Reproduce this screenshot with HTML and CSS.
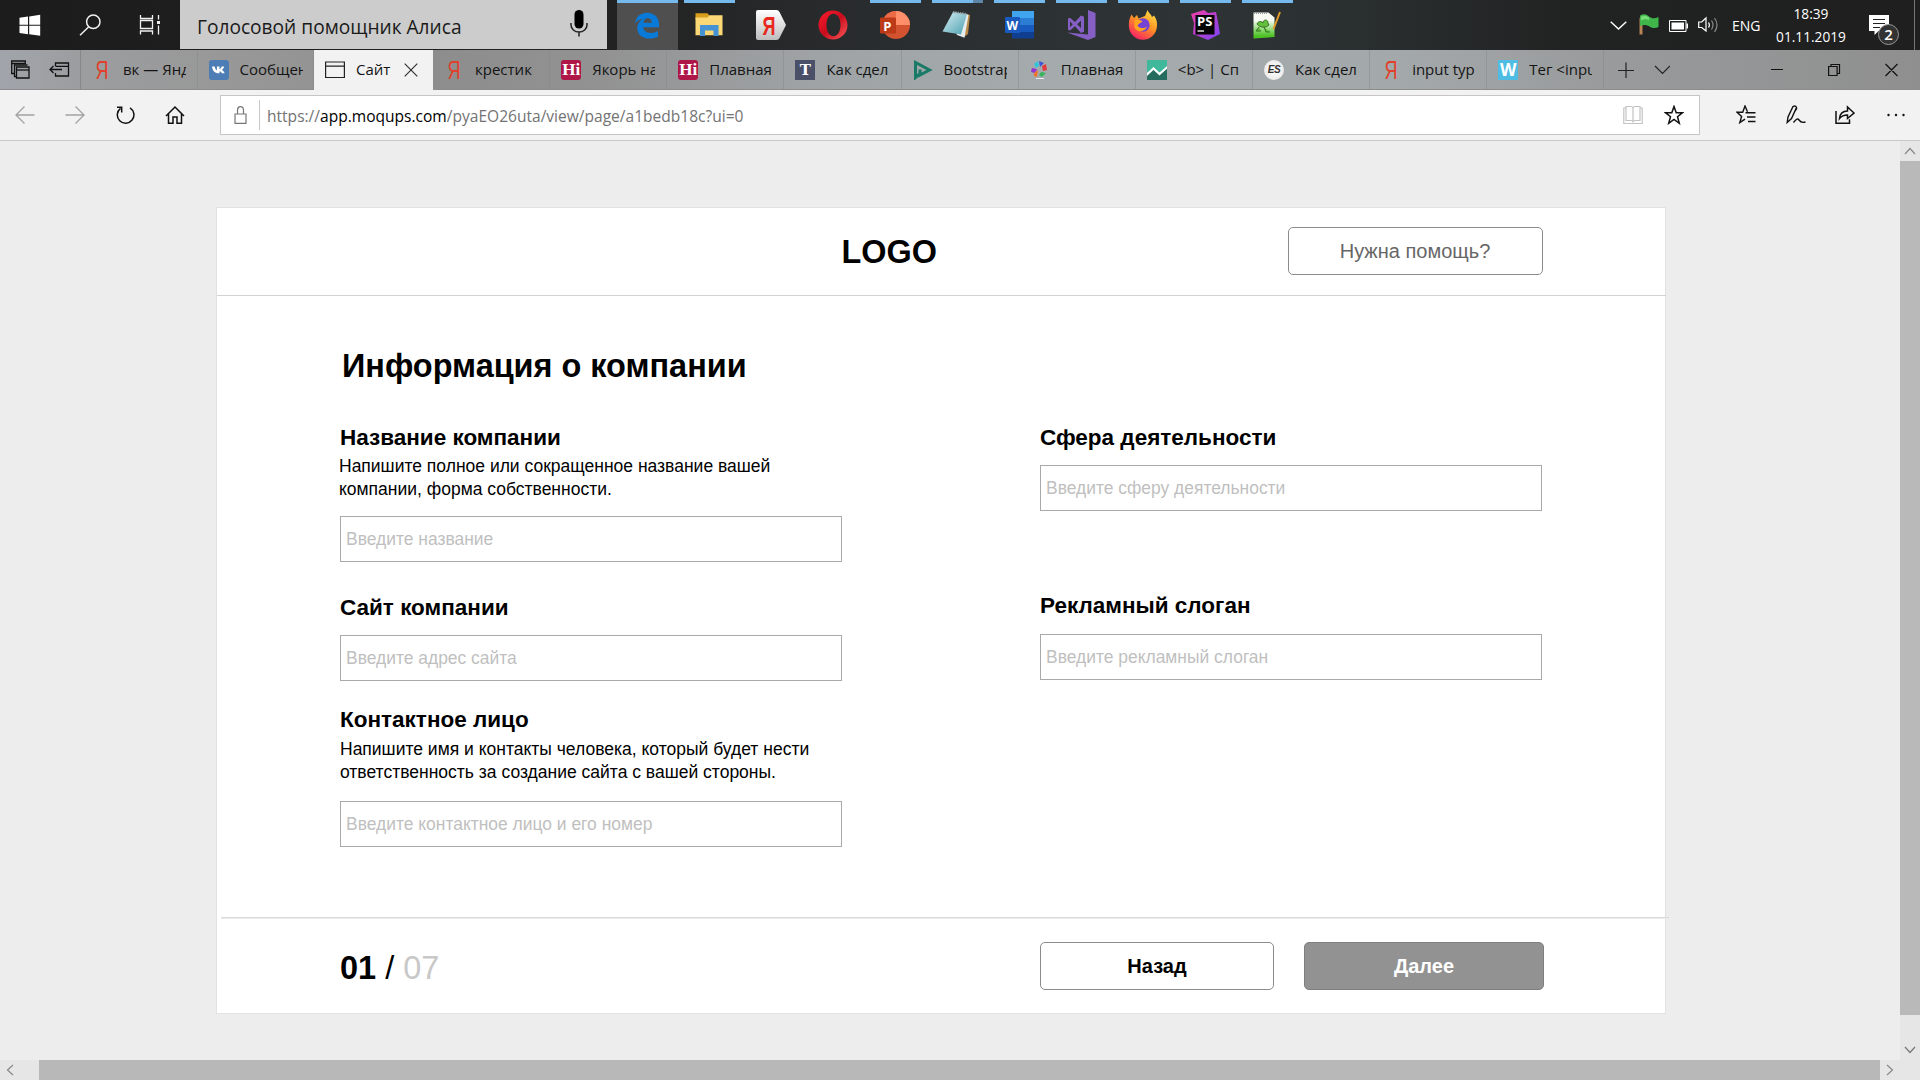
FILE: index.html
```html
<!DOCTYPE html>
<html lang="ru">
<head>
<meta charset="utf-8">
<title>Сайт</title>
<link rel="stylesheet" href="styles.css">
</head>
<body>
<div class="taskbar">
  <div class="sysbtns">
    <svg width="60" height="50" viewBox="0 0 60 50"><path fill="#fff" d="M19.5 17.8l8.500-1.200v8.200h-8.500zM29.200 16.400l11-1.600v10h-11zM19.500 25.800h8.500v8.400l-8.500-1.200zM29.200 25.800h11v10l-11-1.600z"/></svg>
    <svg width="60" height="50" viewBox="0 0 60 50" fill="none" stroke="#f0f0f0" stroke-width="1.500"><circle cx="33.300" cy="21.800" r="6.700"/><path d="M28.800 26.800L20 35.200"/></svg>
    <svg width="60" height="50" viewBox="0 0 60 50" fill="none" stroke="#f0f0f0" stroke-width="1.300"><path d="M20.500 15v3.500h12V15M20.500 34.500V31h12v3.500M20.500 20.500h12v8h-12zM38.500 15v4.500M38.500 25.500v9"/><path d="M37 21h3v3h-3z" fill="#f0f0f0" stroke="none"/></svg>
  </div>
  <div class="search"><span>Голосовой помощник Алиса</span>
    <svg width="18" height="28" viewBox="0 0 18 28"><rect x="4.500" y="0" width="9" height="18.500" rx="4.500"/><path d="M1 13v2a8 7 0 0 0 16 0v-2M9 22v4.500" fill="none" stroke="#222" stroke-width="1.500"/></svg>
  </div>
  <div class="apps">
    <div class="app on active"><svg width="30" height="30" viewBox="0 0 30 30"><path fill="#0a7ad8" d="M3 13.500C4 6 9.200 2.700 15 2.700c7.500 0 12 5 12 11.600v3H11.200c.3 4 3.800 5.700 7.800 5.700 2.700 0 5-.7 7-1.900v5.700c-2.400 1.200-5.200 1.800-8.400 1.800C10.200 28.600 5.300 24.400 5.300 18c0-4 2-7.100 5.200-9.100C7 9.500 4.800 11 3 13.500zM11.300 12.800h8.600c0-2.700-1.500-4.500-4.100-4.500-2.400 0-4.100 1.800-4.500 4.500z"/></svg></div>
    <div class="app on"><svg width="30" height="30" viewBox="0 0 30 30"><path fill="#d89d1c" d="M1.500 3.200h12l2.500 3H27v3H1.500z"/><path fill="#fbd775" d="M1.500 7.500h12l2-2.300h13v20h-27z"/><path fill="#4593d4" d="M6 26V15h18.500v11h-5v-5.500h-8.500V26z"/></svg></div>
    <div class="app"><svg width="32" height="32" viewBox="0 0 32 32"><defs><linearGradient id="ya" x1="0" y1="0" x2="0" y2="1"><stop offset="0" stop-color="#fff"/><stop offset="1" stop-color="#bdbdbd"/></linearGradient></defs><path fill="url(#ya)" d="M3 1h18.500q2 0 3 2L31 16l-6.500 13q-1 2-3 2H3q-2 0-2-2V3q0-2 2-2z"/><text x="7.500" y="25.500" class="ya-big" textLength="13" lengthAdjust="spacingAndGlyphs">Я</text></svg></div>
    <div class="app"><svg width="30" height="30" viewBox="0 0 30 30"><defs><linearGradient id="op" x1="0" y1="0" x2="1" y2="1"><stop offset="0" stop-color="#ff1b2d"/><stop offset=".5" stop-color="#c80d1d"/><stop offset="1" stop-color="#ff5a5a"/></linearGradient></defs><path fill="url(#op)" fill-rule="evenodd" d="M15 .5a14.500 14.500 0 1 0 0 29 14.500 14.500 0 0 0 0-29zM15.500 3.800c4.300 0 7 5 7 11.200s-2.700 11.200-7 11.200-7-5-7-11.200 2.700-11.200 7-11.200z"/></svg></div>
    <div class="app on"><svg width="30" height="30" viewBox="0 0 30 30"><circle cx="16" cy="15" r="14" fill="#d35230"/><path fill="#ed6c47" d="M16 15V1A14 14 0 0 0 2 15z"/><path fill="#ff8f6b" d="M16 15V1a14 14 0 0 1 14 14z"/><rect x="0" y="7.500" width="16" height="16" rx="1" fill="#bd3a18"/><text x="3.300" y="20.500" class="office">P</text></svg></div>
    <div class="app on multi"><svg width="30" height="30" viewBox="0 0 30 30"><defs><linearGradient id="np" x1="0" y1="0" x2="1" y2="1"><stop offset="0" stop-color="#d7eff4"/><stop offset="1" stop-color="#4b9fb0"/></linearGradient></defs><path d="M25 4l3 1-2 19-4 3z" fill="#b98a45"/><path d="M24.500 4l2 1.200-4 22.500-8-3z" fill="#e6edf0"/><path fill="url(#np)" d="M11 2l14 2-6 20.500L.500 21.500z"/><path d="M11 2l14 2" stroke="#9aa6aa" stroke-width="2" stroke-dasharray="1.300 1"/></svg></div>
    <div class="app on"><svg width="30" height="30" viewBox="0 0 30 30"><path fill="#41a5ee" d="M8 1h22v7H8z"/><path fill="#2b7cd3" d="M8 8h22v7H8z"/><path fill="#185abd" d="M8 15h22v7H8z"/><path fill="#103f91" d="M8 22h22v6.500H8z"/><rect x="1" y="7" width="15" height="16" rx="1" fill="#185abd"/><text x="2.500" y="19.500" class="office office-w">W</text></svg></div>
    <div class="app on"><svg width="30" height="30" viewBox="0 0 30 30" fill="#865fc5"><path d="M22 0l7.500 3v24L22 30 1 22.500l21 2z"/><path fill-rule="evenodd" d="M2 8.500l2-.8L9 12l6-6.500 3 1.200v15L15 23l-6-6.700-5 4.200-2-.8zM4 11.500v5.800l2.800-3zM15 10.800l-4 3.500 4 3.700z"/></svg></div>
    <div class="app on"><svg width="30" height="30" viewBox="0 0 30 30"><defs><linearGradient id="ff" x1=".8" y1="0" x2=".2" y2="1"><stop offset="0" stop-color="#ffe04a"/><stop offset=".45" stop-color="#ff9322"/><stop offset="1" stop-color="#f5156c"/></linearGradient></defs><path fill="url(#ff)" d="M3.500 4.500L6 8l3-3 1.500 3.500L14.500 7 17 6l2.500-6c1 3 3.500 4 4.500 7l2-1.500c3 4 3.500 8 2.800 12A14 14 0 0 1 1 17.500C.500 13 1 9 3.500 4.500z"/><circle cx="15" cy="15" r="6.700" fill="#7542d4"/><path fill="#ffa41c" d="M6.500 10.500c4-2 6 0 8 .5-1 2-3.500 2-5 4.500 2 3.500 7 3 9.500 1-2 6-10 6-12.500 1z"/></svg></div>
    <div class="app on"><svg width="32" height="32" viewBox="0 0 32 32"><defs><linearGradient id="ps" x1="0" y1="0" x2="1" y2="1"><stop offset="0" stop-color="#f13ea8"/><stop offset="1" stop-color="#7a44f5"/></linearGradient></defs><path fill="url(#ps)" d="M2 5L15 1l4 3 8-1 2 10 2 12-12 6-10-4-5-2 1-11z"/><rect x="6.500" y="6" width="19" height="19.500" fill="#050505"/><text x="8" y="17" class="pstorm">PS</text><path d="M8.500 22h6.500" stroke="#fff" stroke-width="1.300"/></svg></div>
    <div class="app on"><svg width="30" height="30" viewBox="0 0 30 30"><defs><linearGradient id="npp" x1="0" y1="0" x2="0" y2="1"><stop offset=".3" stop-color="#f7fbf3"/><stop offset=".9" stop-color="#4cc224"/></linearGradient></defs><path fill="url(#npp)" d="M1.500 2.500h15l6 5V27l-21 1.500z"/><path d="M2 3h14" stroke="#999" stroke-width="2" stroke-dasharray="1 1"/><path fill="#62c03c" stroke="#275c16" stroke-width=".8" d="M5 14c1-3 5-3 6-1 0-4 5-4 5 0l1 2c-3 3-9 3-12-1zM7 17l-3 4h5M12 17l2 5h4"/><path d="M28 2l-6.500 17" stroke="#e19a25" stroke-width="2"/></svg></div>
  </div>
  <div class="tray">
    <svg class="t-chev" width="17" height="9" viewBox="0 0 17 9" fill="none" stroke="#fff" stroke-width="1.400"><path d="M.7.7l7.800 7.300L16.300.7"/></svg>
    <svg class="t-flag" width="20" height="21" viewBox="0 0 20 21"><path d="M.5 4h3v16.500h-3z" fill="#b98354"/><path fill="#3fb54a" d="M1 1.500c4-2 6-1.500 9 1s6 2 9.500.5v10c-3 1.500-6 1.500-9-.5s-6-2-9.500-.5z"/><path fill="#76dd77" d="M2 2.500c4-1.500 5-1 8 1v3c-3-2-5-1-8 0z"/></svg>
    <svg class="t-bat" width="19" height="12" viewBox="0 0 19 12"><path fill="none" stroke="#fff" d="M.5.5h16.500v11H.5z"/><path fill="#fff" d="M2.500 2.500h12.500v7H2.500zM17.500 3.500H19v5h-1.500z"/></svg>
    <svg class="t-vol" width="21" height="18" viewBox="0 0 21 18" fill="none" stroke="#fff" stroke-width="1.200"><path d="M.7 6h3L8 2v13L3.700 11.500h-3z"/><path d="M10.500 6.500q1.800 2.500 0 5"/><path stroke="#8a8a8a" d="M13.500 4.500q3 4.300 0 9M16.500 2q5 6.800 0 14"/></svg>
    <span class="lang">ENG</span>
    <div class="clock"><span>18:39</span><span>01.11.2019</span></div>
    <div class="notif"><svg width="21" height="21" viewBox="0 0 21 21"><path fill="#fff" d="M0 0h20v16H9.500L5.500 20v-4H0z"/><path stroke="#222" stroke-width="1.200" d="M4 4.500h12M4 8.500h12M4 12.500h7"/></svg><span class="badge">2</span></div>
  </div>
</div>

<div class="tabbar">
  <div class="aside">
    <svg width="22" height="22" viewBox="0 0 22 22" fill="none" stroke="#111" stroke-width="1.300"><path d="M4 14.500H.7V2h13.600v3M.7 4.500h13.600"/><path d="M5 17.500H3.500V6h13"/><path fill="#9da1a6" d="M5.500 8h12.500v11h-12.500z"/><path d="M5.500 11h12.500"/></svg>
    <svg width="22" height="22" viewBox="0 0 22 22" fill="none" stroke="#111" stroke-width="1.300"><path d="M6.500 7V4h13v13h-13v-3M6.500 7.300h13M13 10.500H1M4.500 7L1 10.500 4.500 14"/></svg>
  </div>
  <div class="tab"><span class="fav fav-ya">Я</span><span class="name">вк — Янд</span></div>
  <div class="tab"><svg class="fav" viewBox="0 0 20 20"><rect width="20" height="20" rx="3" fill="#4d7db5"/><path fill="#fff" d="M3 6.500h2.600c.6 2.300 1.400 3.500 2.300 3.800V6.500h2.600v2.800c1-.4 1.700-1.500 2.200-2.800h2.500c-.4 1.500-1.300 2.700-2.300 3.500 1.300.7 2.100 1.800 2.800 3.300h-2.800c-.5-1.100-1.300-1.900-2.400-2.100v2.100c-4.500.3-7-2.300-7.500-6.800z"/></svg><span class="name">Сообщен</span></div>
  <div class="tab current"><svg class="fav" viewBox="0 0 20 20" fill="none" stroke="#222" stroke-width="1.200"><path d="M.6 2h18.800v15.500H.6zM.6 6.200h18.800"/></svg><span class="name">Сайт</span><svg class="x" width="14" height="14" viewBox="0 0 14 14" stroke="#333" stroke-width="1.200"><path d="M.7.7l12.600 12.600M13.300.7L.7 13.300"/></svg></div>
  <div class="tab"><span class="fav fav-ya">Я</span><span class="name">крестик</span></div>
  <div class="tab"><span class="fav fav-hi">Hi</span><span class="name">Якорь на</span></div>
  <div class="tab"><span class="fav fav-hi">Hi</span><span class="name">Плавная</span></div>
  <div class="tab"><span class="fav fav-t">T</span><span class="name">Как сдел</span></div>
  <div class="tab"><svg class="fav" viewBox="0 0 20 20"><path fill="none" stroke="#187a67" stroke-width="3" d="M6 14.500L2.500 17.500V2.500l14 7.500-9.500 5V9.500"/></svg><span class="name">Bootstrap</span></div>
  <div class="tab"><svg class="fav" viewBox="0 0 20 20"><path fill="#2fc6dc" d="M4 4l4-3 1 5-3 2z"/><path fill="#3c52d8" d="M9 1l5 2-4 4z"/><path fill="#e23a3e" d="M12 6l4-2 1 6-4 1z"/><path fill="#8f34cf" d="M2 8l5 1-2 4-4-1z"/><path fill="#f0752c" d="M4 13l4-3-1 7-3-1z"/><path fill="#35b65c" d="M11 12l5 1-4 4-3-2z"/><path d="M6 18.500h8" stroke="#e9e9ef"/></svg><span class="name">Плавная</span></div>
  <div class="tab"><svg class="fav" viewBox="0 0 20 20"><path fill="#3fb89c" d="M0 0h20v20H0z"/><path fill="#256b5e" d="M0 15l7-6 6 5 7-7v13H0z"/><path fill="none" stroke="#fff" stroke-width="2.200" d="M-1 15.500l7.500-7 6 5.500L21 6.500"/></svg><span class="name">&lt;b&gt; | Сп</span></div>
  <div class="tab"><span class="fav fav-es">ES</span><span class="name">Как сдел</span></div>
  <div class="tab"><span class="fav fav-ya">Я</span><span class="name">input typ</span></div>
  <div class="tab last"><span class="fav fav-w">W</span><span class="name">Тег &lt;inpu</span></div>
  <svg class="newtab" width="52" height="16" viewBox="0 0 52 16" fill="none" stroke="#222" stroke-width="1.200"><path d="M0 8.500h16M8 .5v16M37 4l7.500 7.500L52 4"/></svg>
  <svg class="winctl" width="127" height="14" viewBox="0 0 127 14" fill="none" stroke="#111" stroke-width="1.200"><path d="M0 6.500h12M57.600 3.500h8.500v9h-8.500zM60 3.500V1.500h8.500v9H66M114.500 1l12 12M126.500 1l-12 12"/></svg>
</div>

<div class="toolbar">
  <div class="nav">
    <svg width="20" height="20" viewBox="0 0 20 20" fill="none" stroke="#a3a3a3" stroke-width="1.300"><path d="M19.500 10H1M9.500 1.500L1 10l8.500 8.500"/></svg>
    <svg width="20" height="20" viewBox="0 0 20 20" fill="none" stroke="#a3a3a3" stroke-width="1.300"><path d="M.5 10H19M10.500 1.500L19 10l-8.500 8.500"/></svg>
    <svg width="20" height="20" viewBox="0 0 20 20" fill="none" stroke="#111" stroke-width="1.500"><path d="M5.500 3.300a8.300 8.300 0 1 0 9.500-.5M2 2.300h4.700V7.500"/></svg>
    <svg width="20" height="20" viewBox="0 0 20 20" fill="none" stroke="#111" stroke-width="1.500"><path d="M1 11l9-9 9 9M3.500 9v9.300H8V12h4v6.300h4.500V9"/></svg>
  </div>
  <div class="url">
    <svg class="lock" width="14" height="18" viewBox="0 0 14 18" fill="none" stroke="#777" stroke-width="1.200"><path d="M1 8h11v9.300H1zM3.500 8V4.500a3 3.800 0 0 1 6 0V8"/></svg>
    <i class="sep"></i>
    <span class="addr">https://<b>app.moqups.com</b>/pyaEO26uta/view/page/a1bedb18c?ui=0</span>
    <svg width="20" height="20" viewBox="0 0 20 20" fill="none" stroke="#c4c4c4" stroke-width="1.200"><path d="M3 1.500h5q2 0 2 2 0-2 2-2h5v14h-5q-2 0-2 2 0-2-2-2H3zM10 3.500v14M3 3H.8v15.500h18.400V3H17"/></svg>
    <svg width="20" height="20" viewBox="0 0 20 20" fill="none" stroke="#111" stroke-width="1.500"><path d="M10 1.500l2.200 6.200h6.300l-5 4 1.800 6.600L10 14.400l-5.300 3.900 1.800-6.600-5-4h6.300z"/></svg>
  </div>
  <div class="acts">
    <svg width="20" height="20" viewBox="0 0 20 20" fill="none" stroke="#111" stroke-width="1.400"><path d="M11.500 6.800L9 1 6.700 7.200H1l4.600 4.200-1.800 6.200L9 14.200M9.500 7.700H19.500M11 12h8.500M12 16.500h7.500"/></svg>
    <svg width="20" height="20" viewBox="0 0 20 20" fill="none" stroke="#111" stroke-width="1.400"><path d="M1.200 17.500L2 12 7 1.500q2.500-1.300 3.500 1L5.500 13.500zM9 6L11 3M7.500 17.500c3-4 4.500-4 5.500-2.500s3 3 6.500 2"/></svg>
    <svg width="20" height="20" viewBox="0 0 20 20" fill="none" stroke="#111" stroke-width="1.500"><path d="M1 6v12.200h13.500v-4M4.500 13.500C5 8.500 8 6 12.500 6V2l6.500 6-6.500 5.500V10C9 10 6.500 11 4.500 13.500z"/></svg>
    <svg width="18" height="20" viewBox="0 0 18 20" fill="#111"><circle cx="1.500" cy="10" r="1.200"/><circle cx="9" cy="10" r="1.200"/><circle cx="16.500" cy="10" r="1.200"/></svg>
  </div>
</div>

<div class="viewport">
  <main class="page">
    <form class="card">
      <header class="head"><h1 class="logo">LOGO</h1><button type="button" class="btn help">Нужна помощь?</button></header>
      <h2 class="title">Информация о компании</h2>
      <div class="cols">
        <div class="col">
          <label class="label">Название компании</label>
          <p class="hint first">Напишите полное или сокращенное название вашей<br>компании, форма собственности.</p>
          <input class="field after-first" placeholder="Введите название">
          <label class="label site">Сайт компании</label>
          <input class="field" placeholder="Введите адрес сайта">
          <label class="label contact">Контактное лицо</label>
          <p class="hint second">Напишите имя и контакты человека, который будет нести<br>ответственность за создание сайта с вашей стороны.</p>
          <input class="field after-second" placeholder="Введите контактное лицо и его номер">
        </div>
        <div class="col">
          <label class="label">Сфера деятельности</label>
          <input class="field" placeholder="Введите сферу деятельности">
          <label class="label slogan">Рекламный слоган</label>
          <input class="field slogan-field" placeholder="Введите рекламный слоган">
        </div>
      </div>
      <hr class="rule">
      <footer class="foot">
        <div class="step"><b>01</b> / <span>07</span></div>
        <button type="button" class="btn back">Назад</button>
        <button type="button" class="btn next">Далее</button>
      </footer>
    </form>
  </main>
  <div class="vscroll">
    <svg width="20" height="20" viewBox="0 0 20 20" fill="none" stroke="#888" stroke-width="1.200"><path d="M5 13l5-5.500L15 13"/></svg>
    <i></i>
    <svg width="20" height="20" viewBox="0 0 20 20" fill="none" stroke="#777" stroke-width="1.200"><path d="M5 7l5 5.500L15 7"/></svg>
  </div>
</div>
<div class="hscroll">
  <svg width="20" height="20" viewBox="0 0 20 20" fill="none" stroke="#888" stroke-width="1.200"><path d="M13 5l-5.500 5L13 15"/></svg>
  <i></i>
  <svg width="20" height="20" viewBox="0 0 20 20" fill="none" stroke="#888" stroke-width="1.200"><path d="M7 5l5.500 5L7 15"/></svg>
</div>
</body>
</html>
```
FILE: styles.css
```css
* { box-sizing: border-box; }
html, body { margin: 0; height: 1080px; overflow: hidden; }
body { width: 1920px; display: flex; flex-direction: column; background: #ededed; font-family: "Open Sans", "Noto Sans", sans-serif; }
svg { display: block; flex: none; }

/* Taskbar */
.taskbar { height: 50px; flex: none; display: flex; background: linear-gradient(90deg, #1c1c1c 0, #222 620px, #2b2f31 940px, #2e3435 1200px, #2a2f30 1350px, #212222 1580px, #1f1f1f 100%); }
.sysbtns { display: flex; width: 180px; }
.search { width: 427px; height: 49px; background: #ccc; display: flex; align-items: center; justify-content: space-between; padding: 0 20px 0 17px; font-size: 19.150px; color: #1a1a1a; }
.search span { padding-top: 4px; }
.search svg { margin: -1px -1px 0 0; }
.apps { display: grid; grid-template-columns: repeat(11, 61px); column-gap: 1px; margin-left: 10px; }
.app { display: flex; align-items: center; justify-content: center; height: 50px; padding: 0 2px 1px 0; }
.on { background: linear-gradient(#76b9ed, #76b9ed) center top / 51px 3px no-repeat; }
.active { background-size: 61px 3px; background-color: #4f4f4f; }
.multi { background: linear-gradient(90deg, #76b9ed 41px, #5d85a5 41px) center top / 51px 3px no-repeat; }
.ya-big { font: bold 25px "Liberation Sans", sans-serif; fill: #e8281f; }
.office { font: bold 13px "Open Sans", sans-serif; fill: #fff; }
.office-w { font-size: 12px; }
.pstorm { font: bold 13px "Open Sans", sans-serif; fill: #fff; }
.tray { display: flex; margin-left: auto; width: 310px; color: #fff; font-size: 13.700px; padding-right: 5px; }
.t-chev { margin-top: 21px; }
.t-flag { margin: 14px 0 0 12px; }
.t-bat { margin: 20px 0 0 10px; }
.t-vol { margin: 16px 0 0 10px; }
.lang { margin: 16px 0 0 13px; line-height: 20px; width: 29px; font-size: 14px; }
.clock { width: 92px; margin-left: 4px; padding-top: 4px; display: flex; flex-direction: column; align-items: center; line-height: 20px; gap: 3px; }
.notif { position: relative; margin: 15px 0 0 12px; height: 21px; }
.tray::after { content: ""; width: 1px; background: #777; margin-left: auto; }
.badge { position: absolute; left: 9px; top: 9px; width: 21px; height: 21px; border: 1px solid #999; border-radius: 50%; background: #333; font-size: 15px; font-weight: 600; line-height: 19px; text-align: center; }

/* Tabs */
.tabbar { height: 40px; flex: none; display: flex; background: linear-gradient(90deg, #a1a5ab 0, #9c9d9f 80px, #979797 250px, #8d8d8d 440px, #929292 600px, #9ea2a4 800px, #a5abad 1050px, #a3a8aa 1400px, #989a9b 1620px, #8f8f8f 100%); border-bottom: 1px solid #8c8c8c; color: #141414; font-size: 15px; }
.aside { width: 81px; display: flex; gap: 16px; padding: 9px 0 0 11px; border-right: 1px solid #858789; }
.tab { width: 117.150px; height: 39px; flex: none; display: flex; align-items: center; padding: 0 10px 0 11px; border-right: 1px solid #84878880; }
.aside + .tab, .aside + .tab + .tab { width: 116.500px; }
.tab.current { width: 119px; height: 40px; background: #f2f2f2; border: 0; }
.name { margin: -2px 0 0 11px; width: 63px; overflow: hidden; white-space: nowrap; line-height: 24px; }
.current .name { width: 37px; }
.x { margin-left: 11px; }
.fav { width: 20px; height: 20px; flex: none; text-align: center; line-height: 20px; overflow: hidden; }
.fav-ya { color: #e2402a; font: 25px/20px "Liberation Sans", sans-serif; transform: scaleX(.720); }
.fav-hi { background: #ae1748; color: #fff; border-radius: 3px; font: bold 17px/20px "Liberation Serif", serif; }
.fav-t { background: #4a5068; color: #fff; font: bold 15px/20px "DejaVu Serif", serif; }
.fav-es { background: radial-gradient(#fff, #e2e2e2); border-radius: 50%; color: #333; font: italic bold 10px/20px "Liberation Sans", sans-serif; letter-spacing: -.5px; }
.fav-w { background: #4fbde3; color: #fff; font: bold 17px/20px "Open Sans", sans-serif; }
.newtab { margin: 12px 0 0 14px; }
.winctl { margin: 13px 22.500px 0 auto; }

/* Address bar */
.toolbar { height: 51px; flex: none; background: #f2f2f2; border-bottom: 1px solid #c8c8c8; display: flex; }
.nav { width: 220px; display: flex; gap: 30px; padding: 15px 0 0 15px; }
.url { width: 1480px; height: 40px; margin-top: 5px; background: #fff; border: 1px solid #c6c6c6; display: flex; align-items: center; gap: 21px; padding: 0 15px 0 13px; }
.lock { margin-top: -1px; }
.sep { width: 1px; height: 30px; background: #c8c8c8; margin-left: -10px; }
.addr { flex: 1; margin-left: -14px; font-size: 15.550px; color: #737373; padding-top: 2px; }
.addr b { font-weight: 400; color: #000; }
.acts { display: flex; gap: 29.500px; padding: 15px 0 0 36px; }
.acts svg:last-child { margin-left: 2px; }

/* Page area and scrollbars */
.viewport { flex: 1; display: flex; min-height: 0; }
.page { flex: 1; padding: 66px 0 0 216px; }
.vscroll { width: 20px; background: #e6e6e6; display: flex; flex-direction: column; }
.vscroll i { height: 854px; background: #b9b9b9; }
.vscroll svg:last-child { margin-top: auto; }
.hscroll { height: 20px; flex: none; background: #e6e6e6; display: flex; }
.hscroll i { width: 1841px; margin-left: 19px; background: #b8b8b8; }

/* Form card */
.card { width: 1450px; height: 807px; background: #fff; border: 1px solid #e2e2e2; font-family: "Liberation Sans", Arial, sans-serif; color: #000; display: flex; flex-direction: column; }
.head { height: 88px; flex: none; display: flex; border-bottom: 1px solid #d2d2d2; margin-right: -1px; }
.logo { margin: 26px 0 0 624.500px; font-size: 32.400px; line-height: 37px; width: 446px; }
.btn { border: 1px solid #8c8c8c; border-radius: 5px; background: #fff; font-family: inherit; font-size: 20px; height: 48px; padding: 1px 0 0; }
.help { width: 255px; margin-top: 19px; color: #666; }
.title { margin: 52px 0 0 125px; font-size: 32.450px; line-height: 37px; }
.cols { display: grid; grid-template-columns: 502px 502px; column-gap: 198px; margin: 38px 0 0 123px; }
.col { display: flex; flex-direction: column; }
.label { font-size: 22.500px; line-height: 28px; padding-top: 1px; height: 28px; font-weight: bold; }
.hint { margin: 3px 0 0; padding-top: 1px; font-size: 17.500px; line-height: 23px; height: 46px; }
.first { margin-left: -1px; }
.second { margin-top: 4px; height: 45px; line-height: 22.500px; }
.field { height: 46px; margin-top: 14px; border: 1px solid #a9a9a9; border-radius: 0; padding: 1px 5px 0; font: 17.450px "Liberation Sans", Arial, sans-serif; background: #fff; }
.field::placeholder { color: #bfbfbf; opacity: 1; }
.after-first { margin-top: 16px; }
.after-second { margin-top: 19px; }
.site { margin-top: 31px; }
.contact { margin-top: 24px; }
.slogan { margin-top: 80px; }
.slogan-field { margin-top: 15px; }
.rule { width: 1448px; height: 2px; border: 0; margin: auto 0 0 4px; background: linear-gradient(#d9d9d9 1px, #ececec 1px); }
.foot { height: 94px; flex: none; display: flex; padding: 23px 0 0 123px; }
.step { width: 700px; padding-top: 8px; font-size: 32.500px; line-height: 37px; }
.step span { color: #c8c8c8; }
.back { width: 234px; font-weight: bold; }
.next { width: 240px; margin-left: 30px; background: #929292; border-color: #7f7f7f; color: #fff; font-weight: bold; }
```
